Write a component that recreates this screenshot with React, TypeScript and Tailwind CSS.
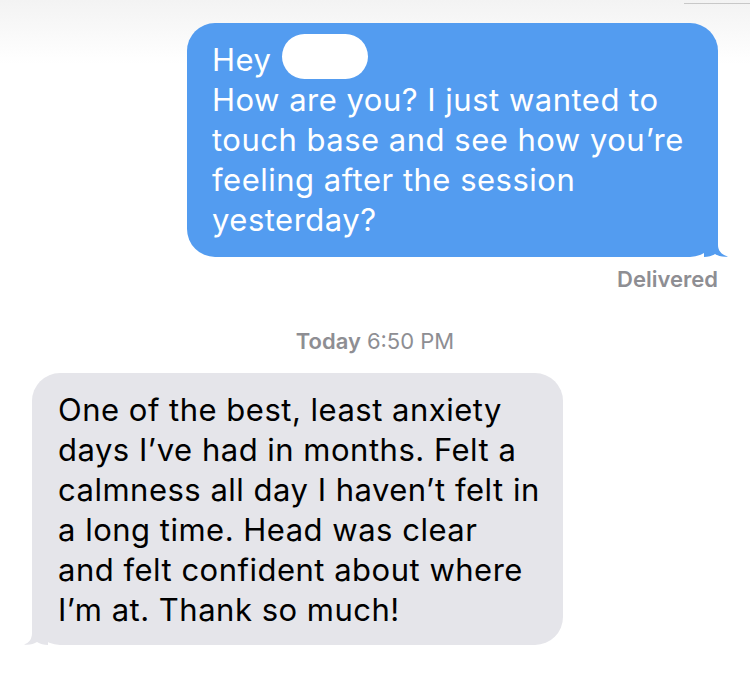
import React from 'react'

const font = { fontFamily: 'Inter, "Helvetica Neue", Arial, sans-serif' }

function BlueTail() {
  return (
    <svg className="absolute -right-[10px] bottom-0" width="24" height="30" viewBox="0 0 24 30">
      <path d="M0 0 L14 0 L14 18 C14 24 18 28 24 29.5 C19 30.2 14 29 11 27 C8 29 4 30 0 30 Z" fill="#539cf0" />
    </svg>
  )
}

function GreyTail() {
  return (
    <svg className="absolute -left-[8px] bottom-0" width="24" height="30" viewBox="0 0 24 30">
      <path d="M24 0 L8 0 L8 18 C8 24 5 28 0 29.5 C5 30.2 10 29 13 27 C16 29 20 30 24 30 Z" fill="#e5e5ea" />
    </svg>
  )
}

export default function App() {
  return (
    <div
      className="w-[750px] h-[688px] overflow-hidden relative bg-[linear-gradient(to_bottom,#f3f3f3,#ffffff_64px)]"
      style={font}
    >
      <div className="absolute top-[3px] right-0 w-[66px] h-px bg-[#c8c8c8]" />

      <div className="flex flex-col pt-[23px]">
        {/* Outgoing */}
        <div className="flex justify-end pr-[32px]">
          <div className="relative w-[531px] rounded-[28px] bg-[#539cf0] pl-[25px] pr-[14px] pt-[17px] pb-[17px] text-white text-[31px] leading-[40px] tracking-[0.5px] whitespace-nowrap">
            <p>
              Hey{' '}
              <span className="inline-block align-middle w-[86px] h-[45px] -mt-[12px] ml-[1px] rounded-full bg-white" />
            </p>
            <p>How are you? I just wanted to</p>
            <p>touch base and see how you’re</p>
            <p>feeling after the session</p>
            <p>yesterday?</p>
            <BlueTail />
          </div>
        </div>
        <div className="flex justify-end pr-[32px] mt-[10px]">
          <span className="text-[22px] leading-[24px] font-semibold text-[#8e8e93]">Delivered</span>
        </div>

        <div className="flex justify-center mt-[38px] text-[22px] leading-[24px] text-[#8e8e93]">
          <span className="font-semibold">Today</span>
          <span className="ml-[6px]">6:50 PM</span>
        </div>

        {/* Incoming */}
        <div className="flex justify-start pl-[32px] mt-[20px]">
          <div className="relative w-[531px] rounded-[28px] bg-[#e5e5ea] pl-[26px] pr-[14px] pt-[17px] pb-[15px] text-black text-[31px] leading-[40px] tracking-[0.5px] whitespace-nowrap">
            <p>One of the best, least anxiety</p>
            <p>days I’ve had in months. Felt a</p>
            <p>calmness all day I haven’t felt in</p>
            <p>a long time. Head was clear</p>
            <p>and felt confident about where</p>
            <p>I’m at. Thank so much!</p>
            <GreyTail />
          </div>
        </div>
      </div>
    </div>
  )
}
